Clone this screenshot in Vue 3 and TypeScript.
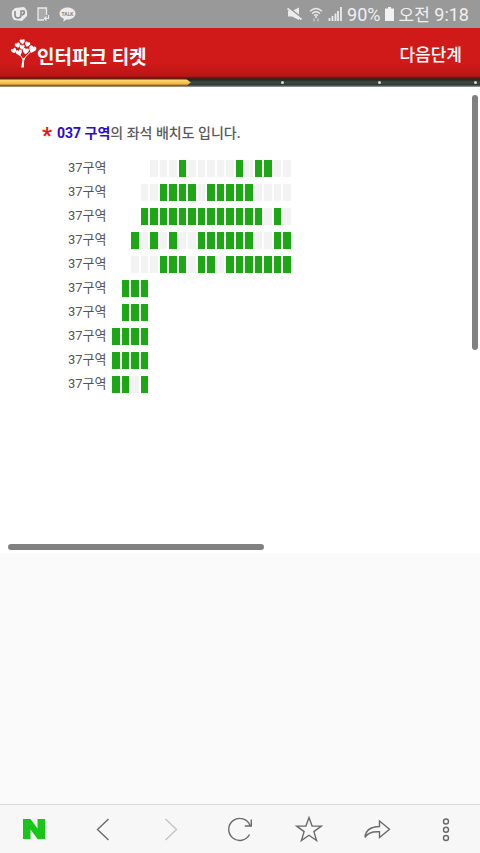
<script setup lang="ts">
type SeatState = 'none' | 'sold' | 'open'

interface SeatRow {
  id: number
  label: string
  seats: SeatState[]
}

const COLUMNS = 19

// '.' no seat, '_' sold, '#' available
const plan: string[] = [
  '....___#_____#_##__',
  '...__####_#####____',
  '...#############_#_',
  '..#_#_#__######__##',
  '..___###_##_#######',
  '.###',
  '.###',
  '####',
  '####',
  '##_#',
]

const states: Record<string, SeatState> = { '.': 'none', _: 'sold', '#': 'open' }

const rows: SeatRow[] = plan.map((line, id) => ({
  id,
  label: '37구역',
  seats: line.padEnd(COLUMNS, '.').split('').map((c) => states[c]),
}))
</script>

<template>
  <div class="screen">
    <div class="status">
      <div class="status-group left">
        <svg class="ic-u" viewBox="0 0 17 14" aria-hidden="true">
          <path d="M4 1 L13 0 Q17 3 16 9 L11 14 L3 13 Q0 10 1 4Z" fill="#ececec" />
          <path d="M4 4v4q0 3 3 3t3-3V4h3q1 3-2 4" fill="none" stroke="#8c8c8c" stroke-width="1.6" />
        </svg>
        <svg class="ic-phone" viewBox="0 0 13 15" aria-hidden="true">
          <path d="M9.500 8V1H1v12h6" fill="#aaa" stroke="#ececec" stroke-width="1.300" />
          <path d="M11.500 8v3.500H8M9.500 9.500l-2 2 2 2" fill="none" stroke="#ececec" stroke-width="1.200" />
        </svg>
        <svg class="ic-talk" viewBox="0 0 17 15" aria-hidden="true">
          <path d="M8.500 0.500c4.500 0 8 2.600 8 6s-3.500 6-8 6l-1 0-3.200 2.200.5-2.900C2.200 10.800.5 8.800.5 6.500c0-3.400 3.500-6 8-6z" fill="#ececec" />
          <text x="8.500" y="8.500" text-anchor="middle" class="talk">TALK</text>
        </svg>
      </div>
      <div class="status-group right">
        <svg class="ic-mute" viewBox="0 0 15 14" aria-hidden="true">
          <path d="M1 4h4L12 .5v12.500L5 9.500H1z" fill="#ececec" />
          <path d="M1 0l14 11" stroke="#999" stroke-width="1.600" />
          <path d="M.5 1.500l14 11" stroke="#ececec" stroke-width="1.600" />
        </svg>
        <svg class="ic-wifi" viewBox="0 0 14 15" aria-hidden="true">
          <path d="M1 4.200q6-5.500 12 0M3 6.500q4-3.600 8 0M5 8.600q2-1.800 4 0" fill="none" stroke="#ececec" stroke-width="1.300" />
          <circle cx="7" cy="10" r="1" fill="#ececec" />
          <path d="M5 14.500v-3M9 11.500v3" stroke="#c4c4c4" stroke-width="1.500" />
        </svg>
        <svg class="ic-signal" viewBox="0 0 14 14" aria-hidden="true">
          <path d="M1.500 14v-3M4.500 14V9M7.500 14V6.500M10 14V4M13 14V0" stroke="#ececec" stroke-width="1.800" />
        </svg>
        <span class="percent">90%</span>
        <svg class="ic-battery" viewBox="0 0 9 14" aria-hidden="true">
          <path d="M3 0h3v1.500h3V14H0V1.500h3z" fill="#f2f2f2" />
        </svg>
        <span class="time"><span class="ampm">오전</span> 9:18</span>
      </div>
    </div>

    <header class="header">
      <h1 class="brand">
        <svg class="tree" viewBox="0 0 26 30" aria-hidden="true">
          <defs>
            <path id="leaf" d="M0 2.800C-3.400.6-3-2.200-1.300-2.200-.5-2.200 0-1.600 0-1 0-1.600.5-2.200 1.300-2.200 3-2.200 3.400.6 0 2.800z" />
          </defs>
          <g fill="#fff">
            <use href="#leaf" transform="translate(11.300 2.500) rotate(-10)" />
            <use href="#leaf" transform="translate(6.500 6) rotate(-20)" />
            <use href="#leaf" transform="translate(11 8)" />
            <use href="#leaf" transform="translate(16.500 5) rotate(15)" />
            <use href="#leaf" transform="translate(2.800 11.500) rotate(-25)" />
            <use href="#leaf" transform="translate(8 13.500) rotate(-15) scale(1.200)" />
            <use href="#leaf" transform="translate(14.800 11.800) rotate(8) scale(1.200)" />
            <use href="#leaf" transform="translate(21.500 10) rotate(20) scale(1.400)" />
          </g>
          <path d="M12 22Q14 17 20 12.500M12 21Q11 18 9 16" fill="none" stroke="#fff" stroke-width="1" />
          <path d="M10.300 28.500Q10.500 23 12.300 19L13.600 19Q12.600 24 12.900 28.500z" fill="#fff" />
        </svg>
        <span>인터파크 티켓</span>
      </h1>
      <button type="button" class="next">다음단계</button>
    </header>

    <div class="progress" aria-hidden="true">
      <div class="progress-done"></div>
      <div class="progress-step"></div>
      <div class="progress-step"></div>
      <div class="progress-step"></div>
    </div>

    <main class="panel">
      <h2 class="title">
        <span class="star">*</span>
        <span><b class="zone">037 구역</b>의 좌석 배치도 입니다.</span>
      </h2>
      <div class="plan">
        <div v-for="row in rows" :key="row.id" class="row">
          <span class="label">{{ row.label }}</span>
          <div class="seats">
            <template v-for="(seat, i) in row.seats" :key="i">
              <button
                v-if="seat === 'open'"
                type="button"
                class="seat open"
                :aria-label="`${row.label} ${i + 1}`"
              ></button>
              <span v-else class="seat" :class="seat"></span>
            </template>
          </div>
        </div>
      </div>
      <div class="bar-v"></div>
      <div class="bar-h"></div>
    </main>

    <nav class="toolbar">
      <button type="button" aria-label="홈">
        <svg viewBox="0 0 40 40"><path d="M9 10h7.500l7 9.500V10H31v20h-7.500l-7-9.500V30H9z" fill="#19c519" /></svg>
      </button>
      <button type="button" aria-label="뒤로">
        <svg viewBox="0 0 40 40"><path d="M25.500 10L14.500 20.500 25.500 31" class="line" /></svg>
      </button>
      <button type="button" aria-label="앞으로" disabled>
        <svg viewBox="0 0 40 40"><path d="M14.500 10L25.500 20.500 14.500 31" class="line faint" /></svg>
      </button>
      <button type="button" aria-label="새로고침">
        <svg viewBox="0 0 40 40"><path d="M30 16.500A11 11 0 1 0 29.500 25.500M31.300 10.500v6.500h-6.500" class="line" /></svg>
      </button>
      <button type="button" aria-label="즐겨찾기">
        <svg viewBox="0 0 40 40"><path d="M20 8.500l3.100 8.600h9.200l-7.400 5.500 2.700 9L20 26.300l-7.600 5.300 2.700-9-7.400-5.500h9.200z" class="line" /></svg>
      </button>
      <button type="button" aria-label="공유">
        <svg viewBox="0 0 40 40"><path d="M22.500 12l10 8.300-10 8.300v-5.800c-7-.5-12 1.500-14.500 5.500 .5-7 6-10.500 14.500-10.800z" class="line" /></svg>
      </button>
      <button type="button" aria-label="더보기">
        <svg viewBox="0 0 40 40">
          <g class="line">
            <circle cx="20" cy="12.500" r="2.500" />
            <circle cx="20" cy="20.700" r="2.500" />
            <circle cx="20" cy="29" r="2.500" />
          </g>
        </svg>
      </button>
    </nav>
  </div>
</template>

<style>
body {
  margin: 0;
  background: #fafafa;
}
</style>

<style scoped>
.screen {
  display: flex;
  flex-direction: column;
  min-height: 100vh;
  background: #fafafa;
  font-family: Roboto, "Noto Sans CJK KR", sans-serif;
}
button {
  margin: 0;
  padding: 0;
  border: 0;
  background: none;
  font: inherit;
  color: inherit;
}
svg {
  display: block;
}
.status {
  display: flex;
  justify-content: space-between;
  align-items: center;
  height: 28px;
  padding: 0 11px;
  background: #999;
  color: #f0f0f0;
  font-size: 18px;
  line-height: 26px;
}
.status-group {
  display: flex;
  align-items: center;
}
.left {
  gap: 9px;
}
.right {
  gap: 5px;
}
.ic-u { width: 17px; height: 14px; }
.ic-phone { width: 13px; height: 15px; }
.ic-talk { width: 17px; height: 15px; }
.talk {
  font-size: 5px;
  font-weight: 700;
  fill: #888;
}
.ic-mute { width: 15px; height: 14px; margin-right: 2px; }
.ic-wifi { width: 14px; height: 15px; }
.ic-signal { width: 14px; height: 14px; }
.percent,
.time {
  padding-top: 2px;
}
.percent { margin-right: -1px; }
.ampm { font-size: 17px; }
.ic-battery { width: 9px; height: 14px; }
.header {
  display: flex;
  justify-content: space-between;
  align-items: center;
  height: 50px;
  padding: 0 18px 0 11px;
  box-sizing: border-box;
  background: linear-gradient(#d01a19 0, #d01a19 70%, #b91614 96%, #6c100c 100%);
  color: #fff;
}
.brand {
  display: flex;
  align-items: flex-end;
  margin: 0;
  padding-top: 2px;
  font-size: 19px;
  font-weight: 700;
  line-height: 22px;
}
.tree {
  width: 26px;
  height: 30px;
}
.next {
  padding-top: 3px;
  font-size: 17px;
  font-weight: 500;
  line-height: 24px;
}
.progress {
  display: grid;
  grid-template-columns: 40% 1fr 97px 96px;
  align-items: center;
  height: 9px;
  padding-right: 3px;
  background: linear-gradient(#45201a 0, #45201a 1px, #252b27 2px, #3d4a43 4px, #303a35 7px, #a6aaa7 9px);
}
.progress-done {
  height: 100%;
  background: linear-gradient(#6d1d0e 0, #6d1d0e 1px, #ffd873 2px, #f3b43a 6px, #5c4626 8px, #d6d2ca 9px);
  clip-path: polygon(0 0, 97% 0, 100% 50%, 97% 100%, 0 100%);
}
.progress-step::after {
  content: "";
  display: block;
  width: 3px;
  height: 3px;
  margin-left: auto;
  border-radius: 2px;
  background: #d8dcc8;
}
.panel {
  position: relative;
  height: 466px;
  background: #fff;
}
.title {
  display: flex;
  align-items: center;
  gap: 5px;
  margin: 0;
  padding: 31px 0 0 42px;
  color: #5a5a5a;
  font-size: 14px;
  font-weight: 500;
  line-height: 24px;
}
.star {
  padding-top: 6px;
  color: #e11;
  font-size: 22px;
  font-weight: 700;
}
.zone {
  color: #2a0bd0;
}
.plan {
  padding: 8px 0 0 68px;
}
.row {
  display: flex;
  align-items: center;
  height: 24px;
}
.label {
  width: 44px;
  color: #555;
  font-size: 13px;
  line-height: 24px;
  white-space: nowrap;
}
.seats {
  display: grid;
  grid-template-columns: repeat(19, 1fr);
  column-gap: 2px;
  width: 179px;
}
.seat {
  height: 17px;
}
.sold {
  background: #f3f3f3;
}
.open {
  background: #1ea714;
}
.bar-v,
.bar-h {
  position: absolute;
  border-radius: 3px;
  background: #818181;
}
.bar-v {
  top: 8px;
  right: 2px;
  width: 6px;
  height: 255px;
}
.bar-h {
  left: 8px;
  bottom: 3px;
  width: 256px;
  height: 6px;
}
.toolbar {
  display: grid;
  grid-template-columns: repeat(7, 1fr);
  align-items: center;
  height: 48px;
  margin-top: auto;
  border-top: 1px solid #dcdcdc;
  background: #f7f7f7;
}
.toolbar button {
  display: flex;
  justify-content: center;
}
.toolbar svg {
  width: 40px;
  height: 40px;
}
.line {
  fill: none;
  stroke: #6a6a6a;
  stroke-width: 1.4;
}
.faint {
  stroke: #c4c4c4;
}
</style>
